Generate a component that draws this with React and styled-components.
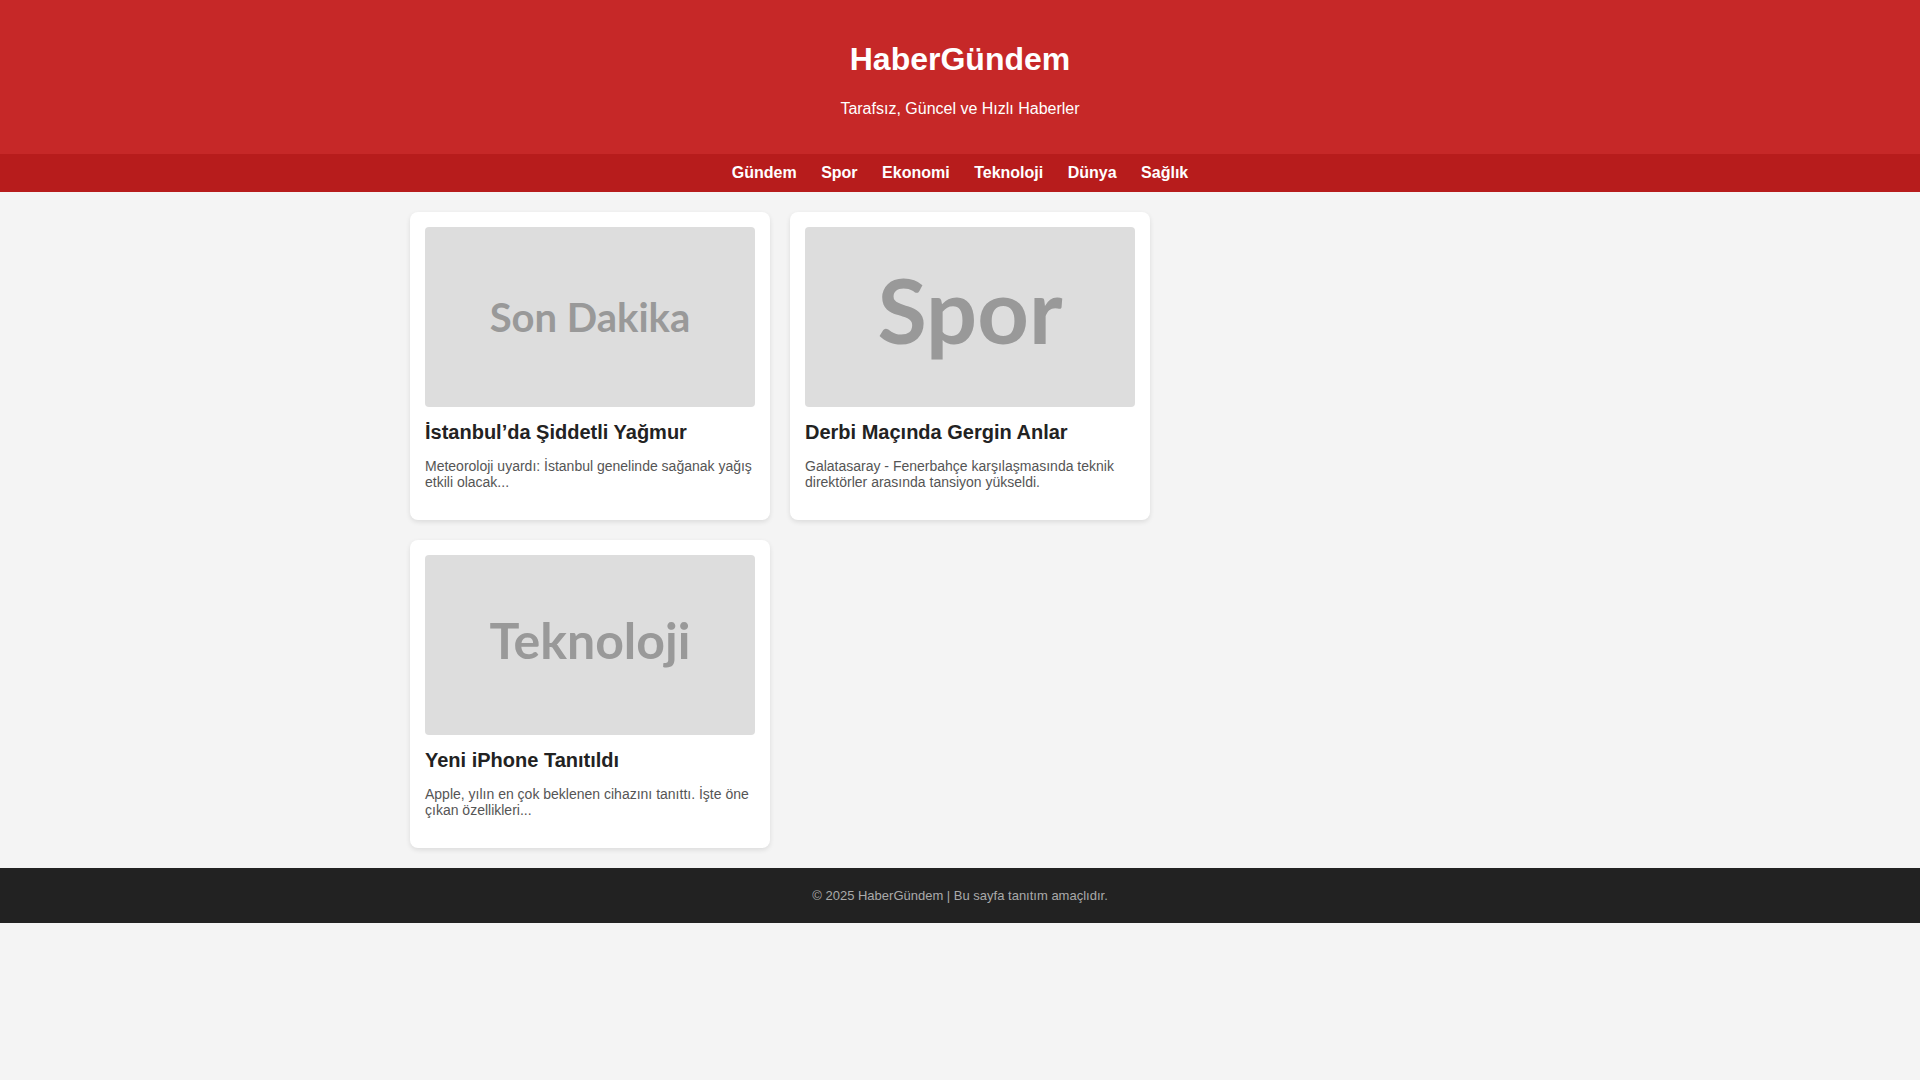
import React from 'react';
import styled, { createGlobalStyle } from 'styled-components';

const GlobalStyle = createGlobalStyle`
  * {
    box-sizing: border-box;
  }
  body {
    margin: 0;
    background: #f4f4f4;
    font-family: "Liberation Sans", Arial, sans-serif;
    color: #333;
  }
`;

const Header = styled.header`
  background: #c62828;
  color: #fff;
  text-align: center;
  padding: 20px;
`;

const Logo = styled.h1`
  margin: 21px 0 21.75px;
  font-size: 32px;
  font-weight: bold;
`;

const Slogan = styled.p`
  margin: 16px 0;
  font-size: 16px;
`;

const Nav = styled.nav`
  background: #b71c1c;
  display: flex;
  justify-content: center;
  gap: 24.5px;
  padding: 10px 0;
`;

const NavLink = styled.a`
  color: #fff;
  font-weight: bold;
  font-size: 16px;
  text-decoration: none;
  cursor: pointer;
`;

const Main = styled.main`
  max-width: 1100px;
  margin: 20px auto;
  display: grid;
  grid-template-columns: repeat(auto-fill, 360px);
  gap: 20px;
`;

const Card = styled.article`
  background: #fff;
  border-radius: 8px;
  box-shadow: 0 2px 5px rgba(0, 0, 0, 0.1);
  padding: 15px;
`;

// placeholder picture: the ink is centred, so labels with a descender sit a bit higher
const Thumb = styled.div`
  height: 180px;
  border-radius: 4px;
  background: #dddddd;
  color: #999999;
  display: flex;
  align-items: center;
  justify-content: center;
  font-family: Lato, "Noto Sans", sans-serif;
  font-weight: bold;
  font-size: ${(props) => props.size}px;
  padding-bottom: ${(props) => props.lift || 0}px;
`;

const Title = styled.h3`
  margin: 14.5px 0 13.5px;
  font-size: 20px;
  color: #222;
`;

const Summary = styled.p`
  margin: 0 0 15px;
  font-size: 14px;
  color: #555;
`;

const Footer = styled.footer`
  background: #222;
  color: #aaa;
  text-align: center;
  font-size: 13px;
  padding: 20px;
`;

const menu = ['Gündem', 'Spor', 'Ekonomi', 'Teknoloji', 'Dünya', 'Sağlık'];

const news = [
  {
    id: 1,
    label: 'Son Dakika',
    size: 40,
    lift: 0,
    title: 'İstanbul’da Şiddetli Yağmur',
    text: 'Meteoroloji uyardı: İstanbul genelinde sağanak yağış etkili olacak...'
  },
  {
    id: 2,
    label: 'Spor',
    size: 90,
    lift: 16,
    title: 'Derbi Maçında Gergin Anlar',
    text: 'Galatasaray - Fenerbahçe karşılaşmasında teknik direktörler arasında tansiyon yükseldi.'
  },
  {
    id: 3,
    label: 'Teknoloji',
    size: 50,
    lift: 9,
    title: 'Yeni iPhone Tanıtıldı',
    text: 'Apple, yılın en çok beklenen cihazını tanıttı. İşte öne çıkan özellikleri...'
  }
];

const App = () => {
  return (
    <>
      <GlobalStyle />
      <Header>
        <Logo>HaberGündem</Logo>
        <Slogan>Tarafsız, Güncel ve Hızlı Haberler</Slogan>
      </Header>
      <Nav>
        {menu.map((item) => (
          <NavLink key={item}>{item}</NavLink>
        ))}
      </Nav>

      <Main>
        {news.map((item) => (
          <Card key={item.id}>
            <Thumb size={item.size} lift={item.lift}>{item.label}</Thumb>
            <Title>{item.title}</Title>
            <Summary>{item.text}</Summary>
          </Card>
        ))}
      </Main>

      <Footer>© 2025 HaberGündem | Bu sayfa tanıtım amaçlıdır.</Footer>
    </>
  );
};

export default App;
